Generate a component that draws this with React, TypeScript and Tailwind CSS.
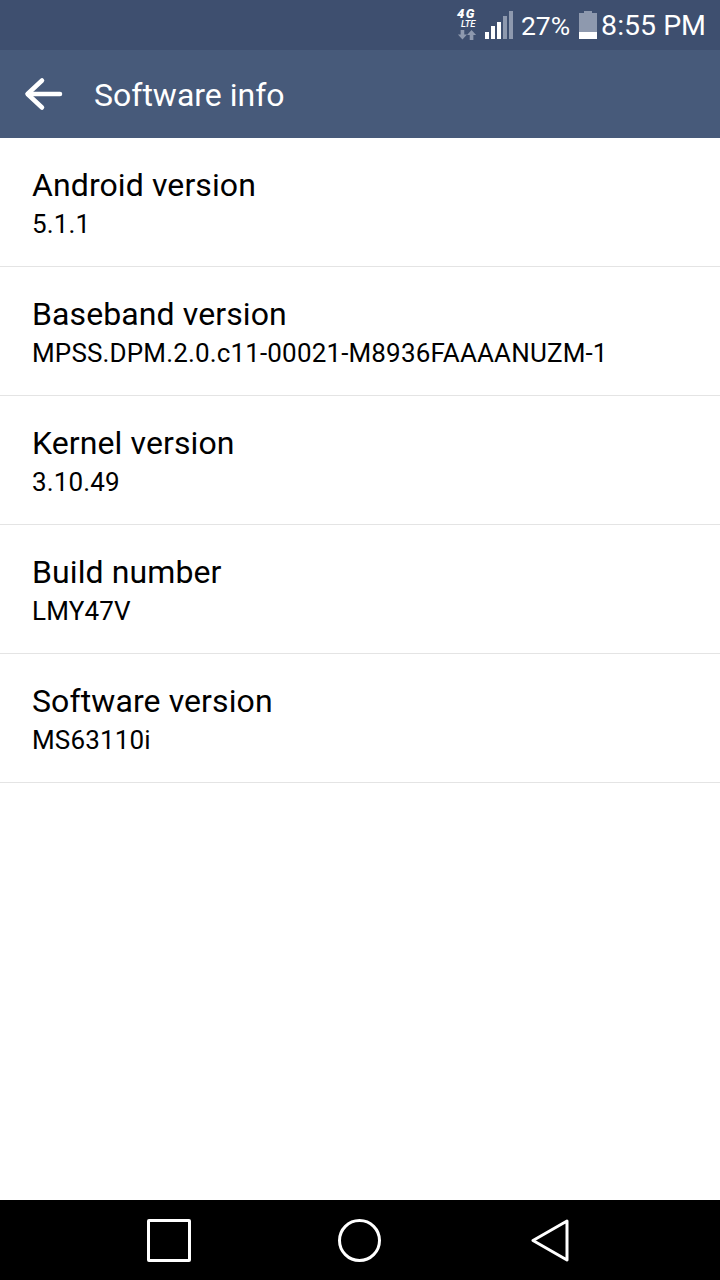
import React from "react";

const items = [
  { title: "Android version", value: "5.1.1" },
  { title: "Baseband version", value: "MPSS.DPM.2.0.c11-00021-M8936FAAAANUZM-1" },
  { title: "Kernel version", value: "3.10.49" },
  { title: "Build number", value: "LMY47V" },
  { title: "Software version", value: "MS63110i" },
];

const StatusBar = () => (
  <div className="flex h-[50px] items-center justify-end bg-[#3e4f6f] pr-[14px] text-white">
    <div className="relative mr-[8px] h-[40px] w-[20px]">
      <span className="absolute left-0 top-[3px] text-[13px] leading-[12px] font-black italic tracking-[1.500px]">4G</span>
      <span className="absolute left-[4px] top-[15px] text-[9.500px] leading-[8px] font-medium italic">LTE</span>
      <svg className="absolute left-0 top-[25px]" width="20" height="10" viewBox="0 0 20 11" fill="#8e99ae">
        <path d="M3 0h4v5h3l-5 5.500L0 5h3z" />
        <path d="M15 0l5 5.500h-3V11h-4V5.500h-3z" />
      </svg>
    </div>
    <svg className="mr-[8px]" width="28" height="28" viewBox="0 0 28 28">
      <rect x="0" y="21" width="4" height="7" fill="#fff" />
      <rect x="6" y="15" width="4" height="13" fill="#fff" />
      <rect x="12" y="11" width="4" height="17" fill="#fff" />
      <rect x="18" y="5" width="4" height="23" fill="#8e99ae" />
      <rect x="24" y="0" width="4" height="28" fill="#8e99ae" />
    </svg>
    <span className="mr-[9px] mt-[2px] text-[26.500px] leading-none">27%</span>
    <svg className="mr-[4px]" width="18" height="28" viewBox="0 0 18 28">
      <path d="M5 0h8v2h5v19H0V2h5z" fill="#8e99ae" />
      <rect x="0" y="21" width="18" height="7" fill="#fff" />
    </svg>
    <span className="mt-[3px] text-[28.500px] leading-none">8:55 PM</span>
  </div>
);

const ActionBar = () => (
  <div className="flex h-[88px] items-center bg-[#475a7a] pl-[24px] text-white">
    <svg className="mr-[31px]" width="39" height="34" viewBox="0 0 39 34" fill="none" stroke="#fff" strokeWidth="4.500" strokeLinecap="round" strokeLinejoin="round">
      <path d="M36 17H4" />
      <path d="M18 3.500 3.500 17 18 30.500" />
    </svg>
    <h1 className="mt-[1px] text-[32px] leading-none font-normal">Software info</h1>
  </div>
);

const InfoRow = ({ title, value }: { title: string; value: string }) => (
  <div className="flex h-[129px] flex-col border-b border-[#e4e4e4] pl-[32px] pt-[28px] text-black">
    <div className="text-[32px] leading-[38px] tracking-[0.100px]">{title}</div>
    <div className="text-[26px] leading-[40px] tracking-[0.150px]">{value}</div>
  </div>
);

const NavBar = () => (
  <div className="flex h-[80px] items-start bg-black pt-[19px]">
    <div className="ml-[147px] h-[43px] w-[44px] rounded-[2px] border-[3px] border-white" />
    <div className="ml-[147px] h-[43px] w-[43px] rounded-full border-[3px] border-white" />
    <svg className="ml-[149px]" width="40" height="43" viewBox="0 0 40 43" fill="none" stroke="#fff" strokeWidth="3" strokeLinejoin="round">
      <path d="M37 2 3 21.500 37 41z" />
    </svg>
  </div>
);

export default function App() {
  return (
    <div className="flex h-[1280px] w-[720px] flex-col overflow-hidden bg-white font-['Roboto',sans-serif]">
      <StatusBar />
      <ActionBar />
      <div className="flex-1">
        {items.map((item) => (
          <InfoRow key={item.title} title={item.title} value={item.value} />
        ))}
      </div>
      <NavBar />
    </div>
  );
}
